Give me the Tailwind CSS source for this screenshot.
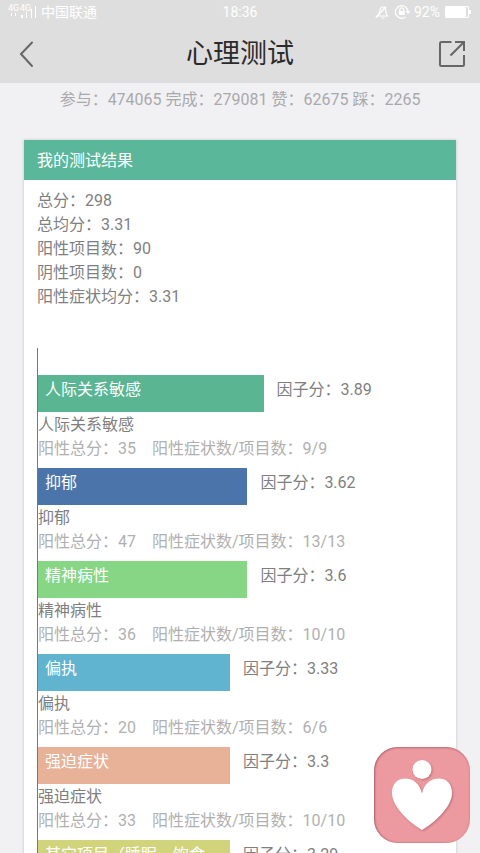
<!DOCTYPE html>
<html lang="zh-CN">
<head>
    <meta charset="UTF-8">
    <meta name="viewport" content="width=device-width, initial-scale=1.0">
    <title>心理测试</title>
    <script src="https://cdn.jsdelivr.net/npm/@tailwindcss/browser@4"></script>
</head>
<body class="bg-[#f1f1f3] font-['Roboto','Noto_Sans_CJK_SC',sans-serif] text-base text-[#7f7f7f]">
    <div class="relative flex h-screen flex-col overflow-hidden">
        <header class="shrink-0 bg-[#dedede]">
            <!-- 状态栏 -->
            <div class="grid h-6 grid-cols-3 items-center px-2 text-sm leading-6 text-white">
                <div class="flex items-center gap-1">
                    <svg class="h-4 w-[29px]" viewBox="0 0 29 16" fill="#fff" aria-hidden="true">
                        <text x="0" y="7" font-size="9">4G</text>
                        <text x="12" y="7" font-size="9">4G</text>
                        <path d="M3 9h1v3H3zM7 9h1v3H7zM13 11h2v3h-2zM18 8h1v6h-1zM23 5h1v9h-1zM27 2h1v12h-1z"/>
                    </svg>
                    <span class="whitespace-nowrap">中国联通</span>
                </div>
                <span class="text-center">18:36</span>
                <div class="flex items-center justify-end gap-1">
                    <svg class="h-4 w-4" viewBox="0 0 16 16" fill="none" stroke="#fff" stroke-width="1.2" aria-hidden="true">
                        <path d="M3 12c1.600-1.200 2.200-2.700 2.600-4.700C6 4.500 7.200 3 9 3s2.600 1.500 2.800 4.300c.2 2 .5 3.500 1.700 4.700zM7.500 14h3M2 13.500L12 2.500"/>
                    </svg>
                    <svg class="h-4 w-4" viewBox="0 0 16 16" fill="none" stroke="#fff" stroke-width="1.2" aria-hidden="true">
                        <path d="M14 8a6.300 6.300 0 1 0-2.500 5M12.200 7.200L14 9.200l1.700-2"/>
                        <path d="M5.800 7V5.800a2 2 0 0 1 4 0V7"/>
                        <path d="M4.800 7h6v4h-6z" fill="#fff" stroke="none"/>
                    </svg>
                    <span>92%</span>
                    <svg class="h-3 w-7" viewBox="0 0 28 12" fill="#fff" aria-hidden="true">
                        <path d="M1.500.5h23v11h-23z" fill="none" stroke="#fff"/>
                        <path d="M2 1h20v10H2zM25 4h2v4h-2z"/>
                    </svg>
                </div>
            </div>
            <!-- 标题栏 -->
            <nav class="grid h-[59px] grid-cols-3 items-center px-3">
                <button type="button" aria-label="返回" class="justify-self-start">
                    <svg class="h-8 w-8" viewBox="0 0 32 32" fill="none" stroke="#666" stroke-width="2" stroke-linecap="round">
                        <path d="M20 4.500L9 16l11 12"/>
                    </svg>
                </button>
                <h1 class="whitespace-nowrap text-center text-[27px] leading-8 text-[#2b2b2b]">心理测试</h1>
                <button type="button" aria-label="分享" class="justify-self-end">
                    <svg class="h-8 w-8" viewBox="0 0 32 32" fill="none" stroke="#666" stroke-width="2">
                        <path d="M15.500 4h-10Q4 4 4 5.500v21Q4 28 5.500 28h21q1.500 0 1.500-1.500V17M14.500 17.500L28 4M19 4h9v9"/>
                    </svg>
                </button>
            </nav>
        </header>

        <main class="min-h-0 flex-1 px-6">
            <p class="mb-7 mt-[5px] text-center leading-6 text-[#a9a9ab]">参与：474065 完成：279081 赞：62675 踩：2265</p>

            <section class="bg-white shadow-[0_0_3px_rgba(0,0,0,0.2)]">
                <h2 class="bg-[#5bb79a] px-[13px] pb-[7px] pt-[9px] leading-6 text-white">我的测试结果</h2>
                <div class="px-[13px] pt-[9px]">
                    <ul class="leading-6">
                        <li>总分：298</li>
                        <li>总均分：3.31</li>
                        <li>阳性项目数：90</li>
                        <li>阴性项目数：0</li>
                        <li>阳性症状均分：3.31</li>
                    </ul>

                    <!-- 因子分条形图 -->
                    <div class="mt-[39px] flex flex-col gap-[7px] border-l border-[#777] pt-[27px] leading-6">
                        <div>
                            <div class="flex">
                                <div class="h-[37px] whitespace-nowrap bg-[#59b592] pl-[7px] pt-[3px] text-white" style="width: 55.7%">人际关系敏感</div>
                                <span class="pl-[13px] pt-[3px]">因子分：3.89</span>
                            </div>
                            <h3 class="mt-px">人际关系敏感</h3>
                            <p class="flex gap-4 text-[#b0b0b0]"><span>阳性总分：35</span><span>阳性症状数/项目数：9/9</span></p>
                        </div>
                        <div>
                            <div class="flex">
                                <div class="h-[37px] whitespace-nowrap bg-[#4a74aa] pl-[7px] pt-[3px] text-white" style="width: 51.7%">抑郁</div>
                                <span class="pl-[13px] pt-[3px]">因子分：3.62</span>
                            </div>
                            <h3 class="mt-px">抑郁</h3>
                            <p class="flex gap-4 text-[#b0b0b0]"><span>阳性总分：47</span><span>阳性症状数/项目数：13/13</span></p>
                        </div>
                        <div>
                            <div class="flex">
                                <div class="h-[37px] whitespace-nowrap bg-[#86d686] pl-[7px] pt-[3px] text-white" style="width: 51.7%">精神病性</div>
                                <span class="pl-[13px] pt-[3px]">因子分：3.6</span>
                            </div>
                            <h3 class="mt-px">精神病性</h3>
                            <p class="flex gap-4 text-[#b0b0b0]"><span>阳性总分：36</span><span>阳性症状数/项目数：10/10</span></p>
                        </div>
                        <div>
                            <div class="flex">
                                <div class="h-[37px] whitespace-nowrap bg-[#61b4d0] pl-[7px] pt-[3px] text-white" style="width: 47.4%">偏执</div>
                                <span class="pl-[13px] pt-[3px]">因子分：3.33</span>
                            </div>
                            <h3 class="mt-px">偏执</h3>
                            <p class="flex gap-4 text-[#b0b0b0]"><span>阳性总分：20</span><span>阳性症状数/项目数：6/6</span></p>
                        </div>
                        <div>
                            <div class="flex">
                                <div class="h-[37px] whitespace-nowrap bg-[#e7b298] pl-[7px] pt-[3px] text-white" style="width: 47.4%">强迫症状</div>
                                <span class="pl-[13px] pt-[3px]">因子分：3.3</span>
                            </div>
                            <h3 class="mt-px">强迫症状</h3>
                            <p class="flex gap-4 text-[#b0b0b0]"><span>阳性总分：33</span><span>阳性症状数/项目数：10/10</span></p>
                        </div>
                        <div>
                            <div class="flex">
                                <div class="h-[37px] whitespace-nowrap bg-[#d2d47b] pl-[7px] pt-[3px] text-white" style="width: 47.4%">其它项目（睡眠、饮食</div>
                                <span class="pl-[13px] pt-[3px]">因子分：3.29</span>
                            </div>
                        </div>
                    </div>
                </div>
            </section>
        </main>

        <!-- 悬浮按钮 -->
        <button type="button" aria-label="心理服务" class="absolute bottom-[10px] right-[10px] size-24 rounded-3xl bg-[#ec9aa0] shadow-[inset_1px_0_2px_rgba(120,50,60,0.5),inset_0_1px_2px_rgba(120,50,60,0.3)]">
            <svg class="size-24 drop-shadow-[1px_1px_1px_rgba(120,50,60,0.4)]" viewBox="0 0 96 96" fill="#fff">
                <circle cx="48" cy="22.500" r="9.500"/>
                <path d="M48 83C36 76 18 60 18 46c0-9 5-14.500 13-14.500 9 0 15 6 17 15 2-9 8-15 17-15 8 0 13 5.500 13 14.500 0 14-18 30-30 37z"/>
            </svg>
        </button>
    </div>
</body>
</html>
